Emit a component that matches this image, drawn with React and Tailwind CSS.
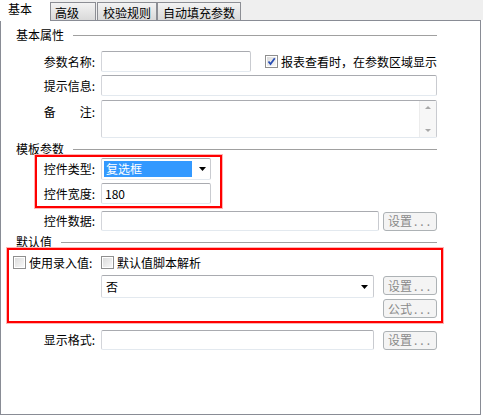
import React from "react";

const font = { fontFamily: '"Noto Sans CJK SC", "Noto Sans", sans-serif' };

function Input({ w, h = 20, children, className = "" }) {
  return (
    <div
      className={`flex items-center border-t border-l border-r border-b border-t-[#a9abb0] border-l-[#d3d5da] border-r-[#c9cbd0] border-b-[#e3e9ef] rounded-[2px] bg-white ${w} ${h} ${className}`}
    >
      {children}
    </div>
  );
}

function Btn({ children }) {
  return (
    <div className="w-[54px] h-[19px] border border-[#adb2b5] rounded-[3px] bg-[#f4f4f4] text-[#8a8a8a] flex items-center pl-[4px] text-[12px] leading-[12px]">
      {children}
      <span className="tracking-[3px] ml-[2px]">...</span>
    </div>
  );
}

function Check({ checked }) {
  return (
    <div className="w-[13px] h-[13px] border border-[#8f8f8f] bg-white p-px shrink-0">
      <div className="w-full h-full bg-gradient-to-br from-[#dcdcdc] to-[#f8f8f8] relative">
        {checked && (
          <svg viewBox="0 0 9 9" className="absolute inset-0 w-full h-full">
            <path d="M1.5 4.5 L3.5 7 L7.8 1.2" stroke="#2a4fb5" strokeWidth="1.8" fill="none" />
          </svg>
        )}
      </div>
    </div>
  );
}

function Header({ title, mt }) {
  return (
    <div className={`flex items-center h-[12px] w-[436px] ${mt}`}>
      <span className="pl-[15px] leading-[12px]">{title}</span>
      <div className="ml-[9px] flex-1 h-px bg-[#a0a0a0]" />
    </div>
  );
}

function Label({ children, className = "" }) {
  return (
    <div className={`w-[94px] text-right whitespace-pre leading-[12px] ${className}`}>
      {children}
    </div>
  );
}

function Arrow() {
  return (
    <svg width="7" height="4" viewBox="0 0 7 4">
      <path d="M0 0 H7 L3.5 4 Z" fill="#000" />
    </svg>
  );
}

export default function App() {
  return (
    <div
      className="relative w-[483px] h-[416px] bg-white text-[12px] text-black overflow-hidden"
      style={font}
    >
      {/* tab strip */}
      <div className="flex items-start h-[20px] bg-[#efefef]">
        <div className="relative z-10 w-[50px] h-[21px] bg-white pl-[8px] pt-[3px] leading-[12px]">
          基本
        </div>
        <div className="mt-[2px] w-[46px] h-[18px] border-t border-l border-r border-[#8c8e94] bg-gradient-to-b from-[#f3f3f3] to-[#d9d9d9] pl-[4px] pt-[4px] leading-[12px]">
          高级
        </div>
        <div className="ml-px mt-[2px] w-[60px] h-[18px] border-t border-l border-r border-[#8c8e94] bg-gradient-to-b from-[#f3f3f3] to-[#d9d9d9] pl-[5px] pt-[4px] leading-[12px]">
          校验规则
        </div>
        <div className="mt-[2px] w-[84px] h-[18px] border-t border-l border-r border-[#8c8e94] bg-gradient-to-b from-[#f3f3f3] to-[#d9d9d9] pl-[5px] pt-[4px] leading-[12px]">
          自动填充参数
        </div>
      </div>

      {/* panel */}
      <div className="w-[481px] h-[395px] border border-[#898c95] bg-white">
        <div className="flex flex-col">
          <Header title="基本属性" mt="mt-[8px]" />

          <div className="flex items-center mt-[10px]">
            <Label>参数名称:</Label>
            <Input w="w-[150px]" h="h-[21px]" className="ml-[6px]" />
            <div className="ml-[14px] flex items-center">
              <Check checked />
              <span className="ml-[3px] leading-[12px]">报表查看时，在参数区域显示</span>
            </div>
          </div>

          <div className="flex items-center mt-[3px]">
            <Label>提示信息:</Label>
            <Input w="w-[336px]" h="h-[21px]" className="ml-[6px]" />
          </div>

          <div className="flex items-start mt-[4px]">
            <Label className="pt-[6px]">{"备\u3000\u3000注:"}</Label>
            <Input w="w-[336px]" h="h-[38px]" className="ml-[6px] justify-end items-stretch">
              <div className="w-[17px] bg-[#f7f7f7] border-l border-[#ececec] flex flex-col items-center justify-between py-[5px]">
                <svg width="6" height="3" viewBox="0 0 6 3">
                  <path d="M0 3 H6 L3 0 Z" fill="#a8a8a8" />
                </svg>
                <svg width="6" height="3" viewBox="0 0 6 3">
                  <path d="M0 0 H6 L3 3 Z" fill="#a8a8a8" />
                </svg>
              </div>
            </Input>
          </div>

          <Header title="模板参数" mt="mt-[5px]" />

          <div className="flex items-center mt-[3px]">
            <Label>控件类型:</Label>
            <Input w="w-[110px]" h="h-[22px]" className="ml-[6px] pl-[2px] pr-[4px]">
              <div className="w-[88px] h-[16px] bg-[#3399ff] text-white leading-[12px] flex items-center pl-[2px]">
                复选框
              </div>
              <div className="flex-1 flex justify-end">
                <Arrow />
              </div>
            </Input>
          </div>

          <div className="flex items-center mt-[3px]">
            <Label>控件宽度:</Label>
            <Input w="w-[110px]" h="h-[21px]" className="ml-[6px] pl-[3px]">
              <span className="leading-[12px]">180</span>
            </Input>
          </div>

          <div className="flex items-center mt-[7px]">
            <Label>控件数据:</Label>
            <Input w="w-[278px]" h="h-[20px]" className="ml-[6px]" />
            <div className="ml-[4px]">
              <Btn>设置</Btn>
            </div>
          </div>

          <Header title="默认值" mt="mt-[5px]" />

          <div className="flex items-center mt-[8px] h-[13px]">
            <div className="w-[100px] flex items-center pl-[12px]">
              <Check />
              <span className="ml-[3px] leading-[12px]">使用录入值:</span>
            </div>
            <Check />
            <span className="ml-[3px] leading-[12px]">默认值脚本解析</span>
          </div>

          <div className="flex items-start mt-[6px]">
            <Input w="w-[273px]" h="h-[23px]" className="ml-[100px] pl-[4px] pr-[5px] justify-between">
              <span className="leading-[12px]">否</span>
              <Arrow />
            </Input>
            <div className="ml-[9px] mt-px flex flex-col gap-[4px]">
              <Btn>设置</Btn>
              <Btn>公式</Btn>
            </div>
          </div>

          <div className="flex items-center mt-[12px]">
            <Label>显示格式:</Label>
            <Input w="w-[273px]" h="h-[20px]" className="ml-[6px]" />
            <div className="ml-[9px]">
              <Btn>设置</Btn>
            </div>
          </div>
        </div>
      </div>

      {/* annotation boxes */}
      <div className="absolute left-[35px] top-[155px] w-[187px] h-[53px] border-2 border-[#ff0000] shadow-[0_0_0_1px_#ffb4b4]" />
      <div className="absolute left-[7px] top-[248px] w-[436px] h-[75px] border-2 border-[#ff0000] shadow-[0_0_0_1px_#ffb4b4]" />
    </div>
  );
}
